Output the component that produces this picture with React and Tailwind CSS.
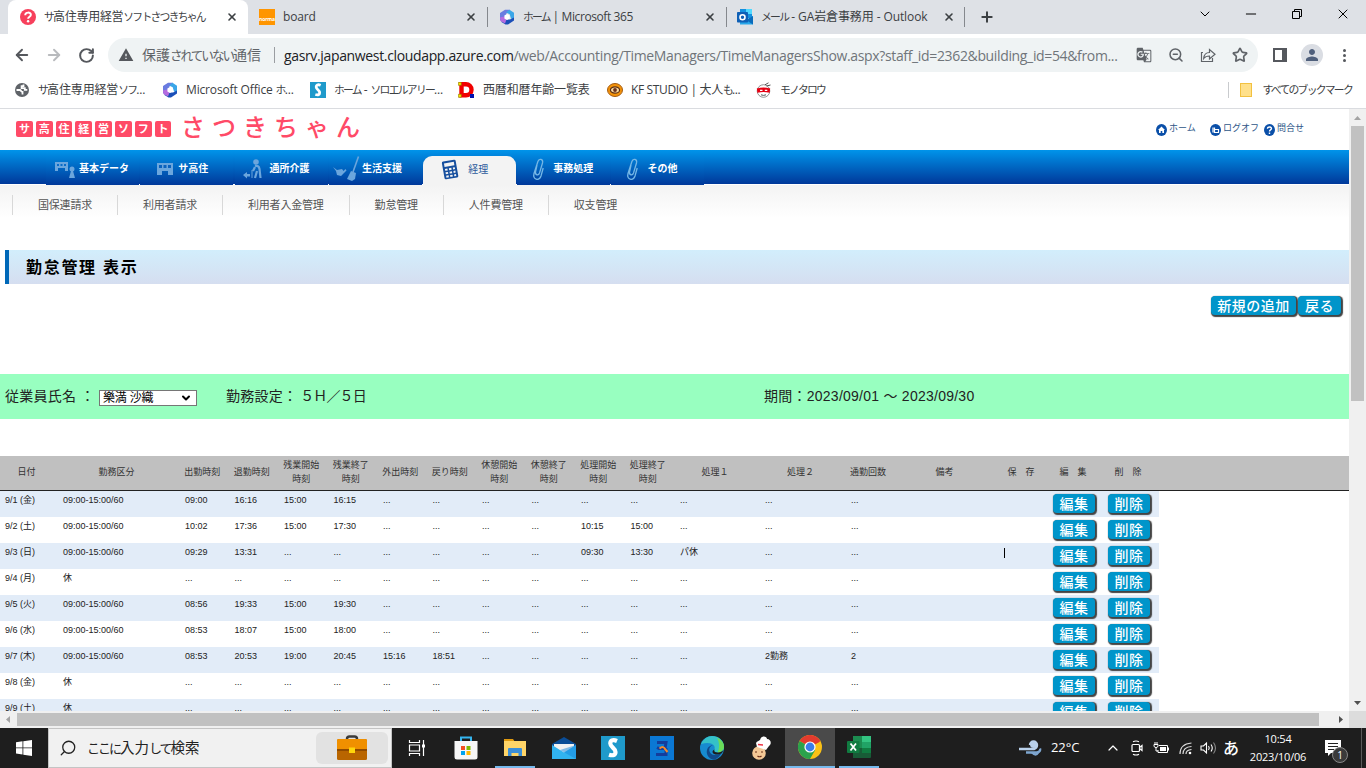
import { Fragment } from 'react';
import { ArrowLeft, ArrowRight, RotateCw, X, Plus, Minus, ChevronDown, ChevronUp, ZoomOut, Star, Search } from 'lucide-react';
import { MdWarning, MdGTranslate, MdPerson } from 'react-icons/md';

const COLS =
  'grid grid-cols-[58px_122px_49.5px_49.5px_49.5px_49.5px_49.5px_49.5px_49.5px_49.5px_49.5px_49.5px_85px_86px_49px_104px_49px_55px_55px]';

const HEADS = [
  '日付', '勤務区分', '出勤時刻', '退勤時刻', '残業開始|時刻', '残業終了|時刻', '外出時刻', '戻り時刻', '休憩開始|時刻', '休憩終了|時刻',
  '処理開始|時刻', '処理終了|時刻', '処理１', '処理２', '通勤回数', '備考', '保　存', '編　集', '削　除',
];

const D = '...';
const OFF = [D, D, D, D, D, D, D, D, D, D, D, D, D];
const ROWS = [
  ['9/1 (金)', '09:00-15:00/60', '09:00', '16:16', '15:00', '16:15', D, D, D, D, D, D, D, D, D],
  ['9/2 (土)', '09:00-15:00/60', '10:02', '17:36', '15:00', '17:30', D, D, D, D, '10:15', '15:00', D, D, D],
  ['9/3 (日)', '09:00-15:00/60', '09:29', '13:31', D, D, D, D, D, D, '09:30', '13:30', 'パ休', D, D],
  ['9/4 (月)', '休', ...OFF],
  ['9/5 (火)', '09:00-15:00/60', '08:56', '19:33', '15:00', '19:30', D, D, D, D, D, D, D, D, D],
  ['9/6 (水)', '09:00-15:00/60', '08:53', '18:07', '15:00', '18:00', D, D, D, D, D, D, D, D, D],
  ['9/7 (木)', '09:00-15:00/60', '08:53', '20:53', '19:00', '20:45', '15:16', '18:51', D, D, D, D, D, '2勤務', '2'],
  ['9/8 (金)', '休', ...OFF],
  ['9/9 (土)', '休', ...OFF],
];

// Windows UI fonts set kana narrower than kanji
function Jp({ children }) {
  return children.split(/([\u3041-\u30ff]+)/).map((part, i) =>
    i % 2 ? (
      <span key={i} className="text-[0.9em] tracking-[-0.16em]">{part}</span>
    ) : (
      <Fragment key={i}>{part}</Fragment>
    )
  );
}

function QuestionIcon() {
  return (
    <svg className="w-4 h-4 shrink-0" viewBox="0 0 16 16">
      <circle cx="8" cy="8" r="8" fill="#f7405c" />
      <path d="M5.2 6.3c0-3.6 5.7-3.5 5.7-.5 0 2-2.8 1.9-2.8 4" fill="none" stroke="#fff" strokeWidth="1.9" />
      <circle cx="8.1" cy="12.3" r="1.2" fill="#fff" />
    </svg>
  );
}

function M365Icon() {
  return (
    <svg className="w-4 h-4 shrink-0" viewBox="0 0 16 16">
      <path d="M6 .7h5l-3.500 3.500v4.500L3.500 13 1 11V4z" fill="#6a7be0" />
      <path d="M10.500.7 15 3.700v7L12 9.500l-1.300-4.200L7 3.500z" fill="#3ba6e8" />
      <path d="M15 8.500v3L9 15.600H6.500L2 12.800l5-2.300h4z" fill="#1b4fb8" />
      <path d="M1 8.500 5 7.500l2.500 3L6 14.500l-4.500-2.600z" fill="#b56be0" />
      <path d="m8 5 2.700 1.500v3L8 11 5.400 9.500v-3z" fill="#fff" />
    </svg>
  );
}

function OutlookIcon() {
  return (
    <svg className="w-4 h-4 shrink-0" viewBox="0 0 16 16">
      <path d="M3 0h12v9H3z" fill="#1490df" />
      <path d="M9 0h6v5H9z" fill="#50d9ff" />
      <path d="M3 8l6 3 7-4v8.500H3z" fill="#28a8ea" />
      <path d="M16 7v8.500L9 11z" fill="#0a6cbc" />
      <rect y="3" width="11" height="10.500" rx=".8" fill="#0f60b6" />
      <circle cx="5.500" cy="8.200" r="2.500" fill="none" stroke="#fff" strokeWidth="1.600" />
    </svg>
  );
}

function SIcon({ className }) {
  return (
    <svg className={className} viewBox="0 0 24 24">
      <path d="M0 0h24v24H0z" fill="#1f9acb" />
      <path d="M16 5C11.500 3 9.300 4.700 9.300 7.500c0 3.700 5.200 4.500 5.200 8.500 0 3-2.500 4-6.500 2.700" fill="none" stroke="#fff" strokeWidth="4.200" />
    </svg>
  );
}

function GlobeIcon() {
  return (
    <svg className="w-[14px] h-[14px] shrink-0" viewBox="0 0 14 14">
      <circle cx="7" cy="7" r="7" fill="#5f6368" />
      <path d="M1.500 7h3.200c1.600 0 1.200 1.800 2.800 1.800v2.600M8.500 1.500v1.700H6.600v2h3.200v1.600h2.500" fill="none" stroke="#fff" strokeWidth="1.800" />
    </svg>
  );
}

function DIcon() {
  return (
    <svg className="w-4 h-4 shrink-0" viewBox="0 0 16 16">
      <path d="M3.500 2.200H8a5.500 5.500 0 0 1 0 11H3.500z" fill="none" stroke="#f00000" strokeWidth="4.400" />
      <path d="M.3.3h3v3h-3zM.3 12.300h3v3h-3z" fill="#f5e800" stroke="#8a6a00" strokeWidth=".6" />
      <path d="M12 12h4v4h-4z" fill="#0010b0" />
    </svg>
  );
}

function EyeIcon() {
  return (
    <svg className="w-4 h-4 shrink-0" viewBox="0 0 16 16">
      <ellipse cx="8" cy="8" rx="7.500" ry="6.500" fill="#f39208" stroke="#a45a10" />
      <ellipse cx="8" cy="8" rx="4.600" ry="3.200" fill="#f8d9a0" stroke="#5b2c10" strokeWidth="1.200" />
      <circle cx="8" cy="8" r="1.900" fill="#6b2e18" />
    </svg>
  );
}

function MonoIcon() {
  return (
    <svg className="w-4 h-4 shrink-0" viewBox="0 0 16 16">
      <circle cx="7.500" cy="9" r="6.300" fill="#fff" stroke="#777" strokeWidth=".8" />
      <path d="M.8 6.500q6.700-2 13.400 0l-.6 4.300q-6.100-1.800-12.200 0z" fill="#e60012" />
      <path d="M4 8.300h2.500M8.800 8.300h2.500" stroke="#fff" strokeWidth="1.200" />
      <path d="M5 12.800q2.500 1.200 5 0M9 2.800 12.500.8M10.500 4l4-1" fill="none" stroke="#555" />
    </svg>
  );
}

function Tab({ icon, label, className }) {
  return (
    <div className={`flex items-center h-[34px] ${className}`}>
      {icon}
      <span className="flex-1 whitespace-nowrap overflow-hidden"><Jp>{label}</Jp></span>
      <X className="w-3 h-3 shrink-0 text-[#3c4043]" strokeWidth={3.2} />
    </div>
  );
}

function Browser() {
  return (
    <div className="font-['Open_Sans','Noto_Sans_CJK_JP',sans-serif] text-[#3c4043]">
      {/* Tab strip */}
      <div className="h-[34px] bg-[#dee1e6] flex text-[12px] tracking-[-0.15px]">
        <Tab
          className="w-[240px] ml-2 bg-white rounded-t-lg pl-3 pr-[10px] gap-2 tracking-[-0.3px]"
          icon={<QuestionIcon />}
          label="サ高住専用経営ソフトさつきちゃん"
        />
        <Tab
          className="w-[239px] pl-[11px] pr-[10px] gap-2"
          icon={
            <span className="w-4 h-4 shrink-0 bg-[#ff9500] text-white text-[5px] font-bold leading-4 pt-[2px] text-center">norma</span>
          }
          label="board"
        />
        <div className="w-px h-5 mt-[7px] bg-[#85888d]" />
        <Tab className="w-[238px] pl-[11px] pr-[10px] gap-2 tracking-[-0.4px]" icon={<M365Icon />} label="ホーム | Microsoft 365" />
        <div className="w-px h-5 mt-[7px] bg-[#85888d]" />
        <Tab className="w-[237px] pl-[10px] pr-[9px] gap-2 tracking-[-0.1px]" icon={<OutlookIcon />} label="メール - GA岩倉事務用 - Outlook" />
        <div className="w-px h-5 mt-[7px] bg-[#85888d]" />
        <Plus className="w-4 h-4 mt-[9px] ml-[14px]" strokeWidth={3} />
        <div className="ml-auto flex mt-[6px] mr-[15px] gap-[30px] text-black">
          <ChevronDown className="w-4 h-4" strokeWidth={1.5} />
          <Minus className="w-4 h-4" strokeWidth={1.5} />
          <svg className="w-4 h-4" viewBox="0 0 16 16" fill="none" stroke="currentColor">
            <path d="M3.500 5.500h7v7h-7zM5.500 5.500v-2h7v7h-2" />
          </svg>
          <X className="w-4 h-4" strokeWidth={1.5} />
        </div>
      </div>

      {/* Toolbar */}
      <div className="h-[38px] pt-1 flex items-center bg-white">
        <ArrowLeft className="w-[18px] h-[18px] ml-[13px] text-[#55585d]" strokeWidth={2.5} />
        <ArrowRight className="w-[18px] h-[18px] ml-[14px] text-[#b9bbbe]" strokeWidth={2.5} />
        <RotateCw className="w-[17px] h-[17px] ml-[15px] text-[#55585d]" strokeWidth={2.8} />
        <div className="ml-[13px] w-[1150px] h-[34px] rounded-full bg-[#eff3f4] flex items-center pl-[10px] pr-[10px] text-[14px] text-[#70757a]">
          <MdWarning className="w-4 h-4 text-[#55585d]" />
          <span className="ml-[8px] w-[123px] whitespace-nowrap text-[#5f6368]"><Jp>保護されていない通信</Jp></span>
          <span className="w-px h-4 bg-[#9a9da1] mx-[9px]" />
          <span className="whitespace-nowrap tracking-[-0.35px]">
            <span className="text-[#202124]">gasrv.japanwest.cloudapp.azure.com</span>
            /web/Accounting/TimeManagers/TimeManagersShow.aspx?staff_id=2362&amp;building_id=54&amp;from...
          </span>
          <div className="ml-auto flex items-center gap-4 text-[#5f6368]">
            <MdGTranslate className="w-4 h-4" />
            <ZoomOut className="w-4 h-4" strokeWidth={2.3} />
            <svg className="w-4 h-4" viewBox="0 0 16 16" fill="none" stroke="currentColor" strokeWidth="1.2">
              <path d="M3 5.500H1.500v9h11V11M9.500 2.500v3C6 5.500 4 8 3.700 11.500c1.500-2 3-2.500 5.800-2.500v3L15 7.200z" />
            </svg>
            <Star className="w-4 h-4" strokeWidth={2.5} />
          </div>
        </div>
        <svg className="w-[14px] h-[14px] ml-[15px] shrink-0" viewBox="0 0 14 14">
          <path d="M1 1h12v12H1z" fill="none" stroke="#55585d" strokeWidth="2" />
          <path d="M9 1h4v12H9z" fill="#55585d" />
        </svg>
        <span className="ml-[14px] w-[22px] h-[22px] shrink-0 rounded-full bg-[#dadde3] flex items-center justify-center">
          <MdPerson className="w-[18px] h-[18px] text-[#50607c]" />
        </span>
        <div className="ml-[20px] flex flex-col gap-[2px]">
          <span className="w-[3px] h-[3px] rounded-full bg-[#55585d]" />
          <span className="w-[3px] h-[3px] rounded-full bg-[#55585d]" />
          <span className="w-[3px] h-[3px] rounded-full bg-[#55585d]" />
        </div>
      </div>

      {/* Bookmarks */}
      <div className="h-[37px] border-b border-[#dadce0] bg-white flex items-center text-[12px] whitespace-nowrap pl-[15px] tracking-[-0.15px]">
        <div className="w-[147px] flex items-center gap-[9px]"><GlobeIcon /><span><Jp>サ高住専用経営ソフ...</Jp></span></div>
        <div className="w-[148px] flex items-center gap-2"><M365Icon /><span><Jp>Microsoft Office ホ...</Jp></span></div>
        <div className="w-[148px] flex items-center gap-2"><SIcon className="w-4 h-4 shrink-0" /><span><Jp>ホーム - ソロエルアリー...</Jp></span></div>
        <div className="w-[149px] flex items-center gap-[9px]"><DIcon /><span><Jp>西暦和暦年齢一覧表</Jp></span></div>
        <div className="w-[149px] flex items-center gap-2 tracking-[-0.35px]"><EyeIcon /><span><Jp>KF STUDIO | 大人も...</Jp></span></div>
        <div className="flex items-center gap-2"><MonoIcon /><span><Jp>モノタロウ</Jp></span></div>
        <div className="ml-auto mr-[14px] flex items-center">
          <span className="w-px h-4 bg-[#c9cbce]" />
          <span className="ml-[11px] mr-[11px] w-3 h-[14px] bg-[#ffe08a] border border-[#f2c140]" />
          <span><Jp>すべてのブックマーク</Jp></span>
        </div>
      </div>
    </div>
  );
}

const PALE = '#6ba6dd';

function BuildingIcon({ person }) {
  return (
    <svg className={person ? 'w-[21px] h-[18px] mt-[3px]' : 'w-[18px] h-[18px]'} viewBox={person ? '0 0 21 18' : '0 0 18 18'}>
      {person ? (
        <>
          <path d="M0 1h13v9h-3V7H3v3H0z" fill={PALE} />
          <path d="M2 3h2v2H2zM5.500 3h2v2h-2zM9 3h2v2H9z" fill="#0a6cc8" />
          <circle cx="17" cy="8" r="2.500" fill={PALE} />
          <path d="M16 10h2l2 7h-6z" fill={PALE} />
        </>
      ) : (
        <>
          <path d="M1 3h16v12h-5v-4H6v4H1z" fill={PALE} />
          <path d="M3 5h3v3H3zM7.500 5h3v3h-3zM12 5h3v3h-3z" fill="#0a62be" />
        </>
      )}
    </svg>
  );
}

function WalkIcon() {
  return (
    <svg className="w-[22px] h-[22px]" viewBox="0 0 22 22">
      <circle cx="14" cy="4" r="2.800" fill={PALE} />
      <path d="M13 8c2.500-.5 4 0 4.500 3l1 9M15 13l-2 7M13 9l-2 4" fill="none" stroke={PALE} strokeWidth="2.200" />
      <path d="M10 12v8" stroke={PALE} />
      <path d="M1 17l4-3v2h3v2.500H5v2z" fill={PALE} />
    </svg>
  );
}

function BroomIcon() {
  return (
    <svg className="w-[27px] h-[26px]" viewBox="0 0 27 26">
      <path d="M25.500.500 20 16" stroke={PALE} strokeWidth="1.600" />
      <path d="m18 15 5 2-1 6-3 2-5-2z" fill={PALE} />
      <path d="m0 11 4 3 5-1 1.500 2 2-2 1 1.500-2.500 2.500-3 3-4-1-1-4z" fill={PALE} />
    </svg>
  );
}

function CalcIcon() {
  return (
    <svg className="w-[18px] h-[21px]" viewBox="0 0 18 21">
      <g transform="rotate(-10 9 10)">
        <rect x="2" y="1.500" width="14" height="18" rx="1.500" fill="#164f9e" />
        <path d="M4 3.500h10v3.500H4zM4 9h2.500v2H4zM8 9h2.500v2H8zM12 9h2v2h-2zM4 12.500h2.500v2H4zM8 12.500h2.500v2H8zM12 12.500h2v2h-2zM4 16h2.500v2H4zM8 16h2.500v2H8zM12 16h2v2h-2z" fill="#f3f3f3" />
      </g>
    </svg>
  );
}

function ClipIcon() {
  return (
    <svg className="w-[15px] h-[24px]" viewBox="0 0 15 24" fill="none" stroke="#75b7e6" strokeWidth="1.300">
      <path d="M5 8 3.500 15c-.5 3 3 4 4 1l3-10c1-4-3.500-5-4.600-1.500L2 16.500c-1.500 6 5 8 7 2.500l2.200-8" />
    </svg>
  );
}

function NavTab({ icon, label, className }) {
  return (
    <div className={`w-[93px] h-[35px] mr-[1.3px] pt-[2px] flex items-center text-[10px] font-bold text-white whitespace-nowrap bg-linear-to-b from-[#0094ea] to-[#00389a] ${className}`}>
      {icon}
      <span>{label}</span>
    </div>
  );
}

function BlueButton({ children, className }) {
  return (
    <button className={`block h-[19px] rounded-[4px] bg-[#0095ca] text-white font-medium text-[14px] leading-[18px] tracking-[0.5px] whitespace-nowrap shadow-[1px_1px_1px_0.5px_#444] ${className}`}>
      {children}
    </button>
  );
}

function HeaderLink({ label, path, className }) {
  return (
    <span className={`flex items-center gap-[2px] ${className}`}>
      <svg className="w-[11px] h-[12px] mt-[2px]" viewBox="0 0 11 12">
        <ellipse cx="5.500" cy="6" rx="5.500" ry="6" fill="#0a4fa8" />
        {path}
      </svg>
      {label}
    </span>
  );
}

function Page() {
  return (
    <div className="w-[1349px] h-[602px] overflow-hidden bg-white font-['Liberation_Sans','Noto_Sans_CJK_JP',sans-serif] text-[#222]">
      {/* Header */}
      <div className="h-[41px] flex justify-between">
        <div className="flex pl-4 text-[#ff4a67]">
          <div className="flex gap-[3px] mt-[12px]">
            {['サ', '高', '住', '経', '営', 'ソ', 'フ', 'ト'].map((c) => (
              <span key={c} className="w-[16.8px] h-4 rounded-[2px] bg-[#ff4a67] text-white text-[11px] font-bold leading-4 text-center">{c}</span>
            ))}
          </div>
          <div className="ml-[6px] flex text-[24px] leading-[37px] font-medium">
            {['さ', 'つ', 'き', 'ち', 'ゃ', 'ん'].map((c) => (
              <span key={c} className="w-[31px] text-center">{c}</span>
            ))}
          </div>
        </div>
        <div className="flex h-[40px] text-[9px] text-[#2e5688] mr-[45px]">
          <HeaderLink className="w-[54px]" label="ホーム" path={<path d="M2 6l3.500-3.500L9 6H8v3H6.300V7H4.700v2H3V6z" fill="#fff" />} />
          <HeaderLink className="w-[54px]" label="ログオフ" path={<path d="M3 3.500v5M4.500 3.500v5h4v-3h-4" fill="none" stroke="#fff" strokeWidth="1.200" />} />
          <HeaderLink label="問合せ" path={<path d="M3.500 4.800c0-2.600 4-2.300 4-.2 0 1.400-2 1.300-2 2.800M5.500 8.500v1.500" fill="none" stroke="#fff" strokeWidth="1.400" />} />
        </div>
      </div>

      {/* Main navigation */}
      <div className="h-[34px] bg-linear-to-b from-[#0094ea] to-[#00389a]">
        <div className="flex pl-[46px] h-[35px]">
          <NavTab className="pl-[9px] gap-[3px]" icon={<BuildingIcon person />} label="基本データ" />
          <NavTab className="pl-[16px] gap-1" icon={<BuildingIcon />} label="サ高住" />
          <NavTab className="pl-[7px] gap-[6px]" icon={<WalkIcon />} label="通所介護" />
          <NavTab className="pl-[4px] gap-[2px]" icon={<BroomIcon />} label="生活支援" />
          <div className="w-[93px] mr-px h-[29px] mt-[6px] rounded-t-[9px] bg-[#f3f3f3] flex items-center pl-[18px] pb-[3px] gap-[9px] text-[10px] text-[#2c5a9c]">
            <CalcIcon />
            <span>経理</span>
          </div>
          <NavTab className="pl-[15px] gap-[6px]" icon={<ClipIcon />} label="事務処理" />
          <NavTab className="pl-[15px] gap-[6px]" icon={<ClipIcon />} label="その他" />
        </div>
      </div>

      {/* Sub navigation */}
      <div className="h-[66px] pt-[10px] mt-px -mb-px bg-linear-to-b from-[#f3f3f3] to-white to-50%">
        <div className="flex pl-3 text-[11px] tracking-[-0.2px] leading-5 text-[#555]">
          {['国保連請求', '利用者請求', '利用者入金管理', '勤怠管理', '人件費管理', '収支管理'].map((m) => (
            <span key={m} className="border-l border-[#d8d8d8] px-[25px]">{m}</span>
          ))}
        </div>
      </div>

      <div className="h-[34px] pt-[2px] ml-[5px] border-l-4 border-[#0068b8] pl-[17px] bg-linear-to-b from-[#d2eefc] to-[#d5def0] flex items-center text-[16px] font-bold tracking-[1.7px] text-black">
        勤怠管理 表示
      </div>

      <div className="h-[90px] pt-3 pr-[8px] flex justify-end gap-[2px]">
        <BlueButton className="w-[85px]">新規の追加</BlueButton>
        <BlueButton className="w-[43px]">戻る</BlueButton>
      </div>

      {/* Staff filter */}
      <div className="h-[45px] bg-[#98ffc0] flex items-center text-[14px] tracking-[0.25px] whitespace-nowrap">
        <span className="w-[99px] pl-[5px]">従業員氏名 ：</span>
        <span className="w-[98px] h-4 bg-white border border-[#767676] flex items-center justify-between text-[12px] tracking-[-0.2px] text-black pl-[3px] pr-[4px] mt-[2px]">
          樂満 沙織
          <ChevronDown className="w-3 h-3" strokeWidth={4} />
        </span>
        <span className="ml-[29px] w-[538px]">
          勤務設定：<span className="tracking-[-0.9px]"> ５Ｈ／５日</span>
        </span>
        <span>期間：2023/09/01 ～ 2023/09/30</span>
      </div>

      {/* Time table */}
      <div className="mt-[37px] text-[9px]">
        <div className={`h-[35px] bg-[#c0c0c0] border-b border-[#222] text-[#333] ${COLS}`}>
          {HEADS.map((h) => (
            <div key={h} className="flex flex-col items-center justify-center pr-[5px] pb-[3px] leading-[14px] whitespace-nowrap">
              {h.split('|').map((line) => (
                <span key={line}>{line}</span>
              ))}
            </div>
          ))}
        </div>
        {ROWS.map((row, i) => (
          <div key={row[0]} className={`w-[1159px] h-[26px] ${COLS} ${i % 2 ? 'bg-white' : 'bg-[#e2ecf8]'}`}>
            {row.map((cell, j) => (
              <span key={j} className="pl-[5px] pt-[3px] leading-[13px] whitespace-nowrap">{cell}</span>
            ))}
            <span />
            <span className="pl-[5px] pt-[5px]">
              {i === 2 && <span className="block w-px h-[10px] bg-black" />}
            </span>
            <span className="pl-[5px] pt-[3px]"><BlueButton className="w-[42px]">編集</BlueButton></span>
            <span className="pl-[5px] pt-[3px]"><BlueButton className="w-[42px]">削除</BlueButton></span>
          </div>
        ))}
      </div>
    </div>
  );
}

function Arrow({ d, color }) {
  return (
    <svg className="w-[17px] h-[17px] shrink-0" viewBox="0 0 17 17">
      <path d={d} fill={color} />
    </svg>
  );
}

function Task({ children, className = '' }) {
  return <div className={`w-[49.2px] h-10 flex items-center justify-center ${className}`}>{children}</div>;
}

function Taskbar() {
  return (
    <div className="h-10 bg-[#1e1e1e] flex items-center text-white font-['Open_Sans','Noto_Sans_CJK_JP',sans-serif]">
      <div className="w-12 flex justify-center">
        <svg className="w-4 h-4" viewBox="0 0 16 16" fill="#fff">
          <path d="M0 2.200 6.500 1.300v6.200H0zM7.300 1.200 16 0v7.500H7.300zM0 8.300h6.500v6.200L0 13.600zM7.300 8.300H16V16l-8.700-1.300z" />
        </svg>
      </div>
      <div className="w-[344px] h-10 bg-[#f1f1f1] border border-[#c4c4c4] flex items-center pl-[10px] pr-[3px] text-[#222]">
        <Search className="w-[18px] h-[18px] -scale-x-100" strokeWidth={1.7} />
        <span className="ml-[10px] text-[14.5px]"><Jp>ここに入力して検索</Jp></span>
        <div className="ml-auto w-[72px] h-8 rounded-md bg-[#e2e2e2] flex items-center justify-center">
          <svg className="w-[30px] h-[26px]" viewBox="0 0 30 26">
            <path d="M10 4q0-2.500 2.500-2.500h5Q20 1.500 20 4" fill="none" stroke="#3a3a3a" strokeWidth="2.500" />
            <rect y="4" width="30" height="21" rx="1.500" fill="#b96500" />
            <path d="M0 5.500Q0 4 1.500 4h27Q30 4 30 5.500V15H0z" fill="#f09000" />
            <path d="M0 14h30v2H0z" fill="#8f4a00" />
            <rect x="12" y="12.500" width="6" height="5.500" fill="#ffd60a" />
          </svg>
        </div>
      </div>
      <div className="w-[49px] flex justify-center">
        <svg className="w-[18px] h-[16px]" viewBox="0 0 18 16" fill="none" stroke="#fff" strokeWidth="1.200">
          <path d="M1.500 0v2.500h10V0M1.500 5h10v6h-10zM1.500 16v-2.500h10V16M15.500 0v16" />
          <path d="M14 4.500h3v3h-3z" fill="#fff" stroke="none" />
        </svg>
      </div>
      <Task>
        <svg className="w-6 h-6" viewBox="0 0 24 24">
          <path d="M7 6V1.500h10V6" fill="none" stroke="#35b5ef" strokeWidth="2" />
          <path d="M.5 5h23v16q0 2.500-2.500 2.500H3Q.5 23.500.5 21z" fill="#f7f7f7" />
          <path d="M7 10h4v4H7z" fill="#f25022" /><path d="M12.500 10h4v4h-4z" fill="#7fba00" />
          <path d="M7 15h4v4H7z" fill="#00a4ef" /><path d="M12.500 15h4v4h-4z" fill="#ffb900" />
        </svg>
      </Task>
      <Task>
        <div className="w-10 h-10 border-b-2 border-[#76b9ed] flex items-center justify-center">
          <svg className="w-6 h-6 mt-[2px]" viewBox="0 0 24 24">
            <path d="M1 3h9l2 3H1z" fill="#e09a10" />
            <path d="M1 5h22v15H1z" fill="#ffd568" />
            <path d="M5 20v-7q0-1 1-1h12q1 0 1 1v7h-3.500v-3h-7v3z" fill="#3c8fd8" />
          </svg>
        </div>
      </Task>
      <Task>
        <svg className="w-6 h-6" viewBox="0 0 24 24">
          <path d="M0 8 12 1l12 7v3H0z" fill="#0b4d96" />
          <path d="M2 8h20v5l-10 5-10-5z" fill="#f2f2f2" />
          <path d="M0 9l12 7.500L24 9v14H0z" fill="#31b3f0" />
          <path d="M24 9v14L8 14z" fill="#1586db" opacity=".5" />
        </svg>
      </Task>
      <Task><SIcon className="w-6 h-6" /></Task>
      <Task>
        <svg className="w-6 h-6" viewBox="0 0 24 24">
          <path d="M0 0h24v24H0z" fill="#0b78d4" />
          <path d="M7 6.500h9l-1 6H9l-2-1M16 12v6.500H6" fill="none" stroke="#143d9c" strokeWidth="3" />
          <path d="M9.500 12.500q4-3 5.500.5l2.500 3" fill="none" stroke="#f58a2a" strokeWidth="2" />
        </svg>
      </Task>
      <Task>
        <svg className="w-6 h-6" viewBox="0 0 24 24">
          <circle cx="12" cy="12" r="12" fill="#178bd0" />
          <path d="M1 8Q5 0 12 0c7 0 12 5 12 10.500 0 4-3 6-6.500 6-3 0-4-1.500-3-3C16 9 11 5 1 8" fill="#35c1c8" />
          <path d="M17 1.500q7 4 7 9c0 4-3 6-6.500 6Q21 9 17 1.500" fill="#6bdc58" />
          <path d="M13 9c-6 2-4.500 10 2 10 3 0 5-1 7-2.500Q19 22 14.500 23.700C5 23 4 10 13 9" fill="#114a8b" />
          <path d="M14.500 13.500c-1 2 .8 3.300 4 3 2-.2 3.500-1 5-2.500l-1.500 3q-3 2-6.500 1.500c-4-.7-3.500-4-1-5" fill="#1e1e1e" />
        </svg>
      </Task>
      <Task>
        <svg className="w-6 h-6" viewBox="0 0 24 24">
          <circle cx="10" cy="17" r="6.800" fill="#f4c895" />
          <path d="M8 11 7 7C8 5 10 5 11 4c1-5 7-4 7-1 4 0 5 5 2 7l-3 4z" fill="#fff" />
          <path d="m9 8.500 5 .5" stroke="#e34" strokeWidth="1.500" />
          <path d="M6 16h2M12 16h2M8.500 20q2 1.500 4 0" fill="none" stroke="#6b2e18" strokeWidth="1.200" />
        </svg>
      </Task>
      <Task className="bg-[#4a4a4a] border-b-2 border-[#76b9ed]">
        <svg className="w-6 h-6" viewBox="0 0 24 24">
          <circle cx="12" cy="12" r="12" fill="#fbc116" />
          <path d="M12 12 1.600 6A12 12 0 0 1 22.400 6z" fill="#e33b2e" />
          <path d="M12 12 1.600 6A12 12 0 0 0 12 24l5.200-9z" fill="#2ba24c" />
          <path d="M12 12 22.400 6.500H12z" fill="#e33b2e" />
          <circle cx="12" cy="12" r="5.600" fill="#fff" />
          <circle cx="12" cy="12" r="4.400" fill="#3b7de9" />
        </svg>
      </Task>
      <Task>
        <div className="w-10 h-10 border-b-2 border-[#76b9ed] flex items-center justify-center">
          <svg className="w-6 h-6" viewBox="0 0 24 24">
            <path d="M6 1h9v22H7.500Q6 23 6 21.500z" fill="#1c8c50" />
            <path d="M15 1h9v6h-9z" fill="#33c481" /><path d="M15 7h9v6h-9z" fill="#21a366" />
            <path d="M6 13h18v9q0 1-1 1H6z" fill="#185c37" /><path d="M15 13h9v5h-9z" fill="#107c41" />
            <rect y="6" width="12.500" height="12" rx="1" fill="#107c41" />
            <path d="m3.500 8.500 5.500 7M9 8.500l-5.500 7" stroke="#fff" strokeWidth="1.800" />
          </svg>
        </div>
      </Task>

      {/* Tray */}
      <div className="ml-auto flex items-center">
        <svg className="w-6 h-[18px]" viewBox="0 0 24 18" fill="none" strokeWidth="2.400">
          <path d="M0 10h15q3-1 3-4a3.500 3.500 0 0 0-7 0" stroke="#b9d0ea" />
          <path d="M7 13.500h11q4-1 3-4" stroke="#7ea6d0" />
          <path d="M13 13.500q4 4 6 0" stroke="#7ea6d0" />
          <circle cx="14.500" cy="5.500" r="3.500" fill="#b9d0ea" />
        </svg>
        <span className="ml-[8px] w-[54px] text-[13px] tracking-[-0.1px]">22°C</span>
        <ChevronUp className="w-4 h-4" strokeWidth={1.8} />
        <svg className="w-[14px] h-[16px] ml-[9px]" viewBox="0 0 14 16" fill="none" stroke="#fff" strokeWidth="1.200">
          <rect x="2" y="4.500" width="7.500" height="7" rx="1" />
          <path d="m9.500 7.500 2.500-2v5l-2.500-2M3 1.800q3-1.600 6 0M3 14.200q3 1.600 6 0" />
        </svg>
        <svg className="w-[16px] h-[14px] ml-[9px]" viewBox="0 0 16 14" fill="none" stroke="#fff">
          <path d="M6 4.500h8.500v7H5V9M15.500 6.500v3M1 3.500h4v2q-2 2.500-4 0zM2 1v2M4 1v2M3 7v3h2" />
          <path d="M7 6h6v4H7z" fill="#fff" stroke="none" />
        </svg>
        <svg className="w-[13px] h-[14px] ml-[10px]" viewBox="0 0 13 14" fill="none" stroke="#ddd" strokeWidth="1.200">
          <path d="M1 13Q1 3 12.500 2M4 13q0-7 8.500-7.500M7 13q0-4 5.500-4.500" />
          <circle cx="11" cy="12" r="1.300" fill="#fff" stroke="none" />
        </svg>
        <svg className="w-[17px] h-[14px] ml-[8px]" viewBox="0 0 17 14" fill="none" stroke="#fff" strokeWidth="1.100">
          <path d="M1 5h2.500l3-3v10l-3-3H1zM8.500 5q1.500 2 0 4M11 3.500q2.500 3.500 0 7" />
          <path d="M13.500 1.500q4 5.500 0 11" stroke="#888" />
        </svg>
        <span className="ml-[6px] w-4 text-[16px] font-medium leading-10">あ</span>
        <div className="ml-[9px] w-[60px] text-center text-[11px] leading-[18px] tracking-[-0.2px]">
          <div>10:54</div>
          <div>2023/10/06</div>
        </div>
        <div className="relative ml-[17px] mr-[12px] w-6 h-6">
          <svg className="w-4 h-4 mt-1" viewBox="0 0 16 16">
            <path d="M0 0h16v13H6l-3 3v-3H0z" fill="#fff" />
            <path d="M3 3.500h10M3 6.500h10M3 9.500h6" stroke="#222" />
          </svg>
          <span className="absolute left-[7px] top-[11px] w-4 h-4 rounded-full bg-[#3a3a3a] border border-[#888] text-[10px] leading-[14px] text-center">1</span>
        </div>
        <span className="w-px h-10 bg-[#5a5a5a] mr-1" />
      </div>
    </div>
  );
}

export default function App() {
  return (
    <div className="w-[1366px] h-[768px] overflow-hidden bg-white">
      <Browser />
      <div className="flex">
        <Page />
        {/* Vertical scrollbar */}
        <div className="w-[17px] h-[602px] bg-[#f0f0f0] flex flex-col justify-between items-center">
          <Arrow d="M5 11h7L8.500 7z" color="#a3a3a3" />
          <div className="w-[13px] h-[275px] bg-[#c1c1c1] mb-auto" />
          <Arrow d="M5 7h7l-3.500 4z" color="#505050" />
        </div>
      </div>
      {/* Horizontal scrollbar */}
      <div className="h-[17px] flex items-center bg-[#f0f0f0]">
        <Arrow d="M10 5v7L6 8.500z" color="#a3a3a3" />
        <div className="w-[1302px] h-[13px] bg-[#c1c1c1]" />
        <span className="ml-[13px]"><Arrow d="M7 5v7l4-3.500z" color="#505050" /></span>
        <div className="ml-auto w-[17px] h-[17px] bg-[#dcdcdc]" />
      </div>
      <Taskbar />
    </div>
  );
}
